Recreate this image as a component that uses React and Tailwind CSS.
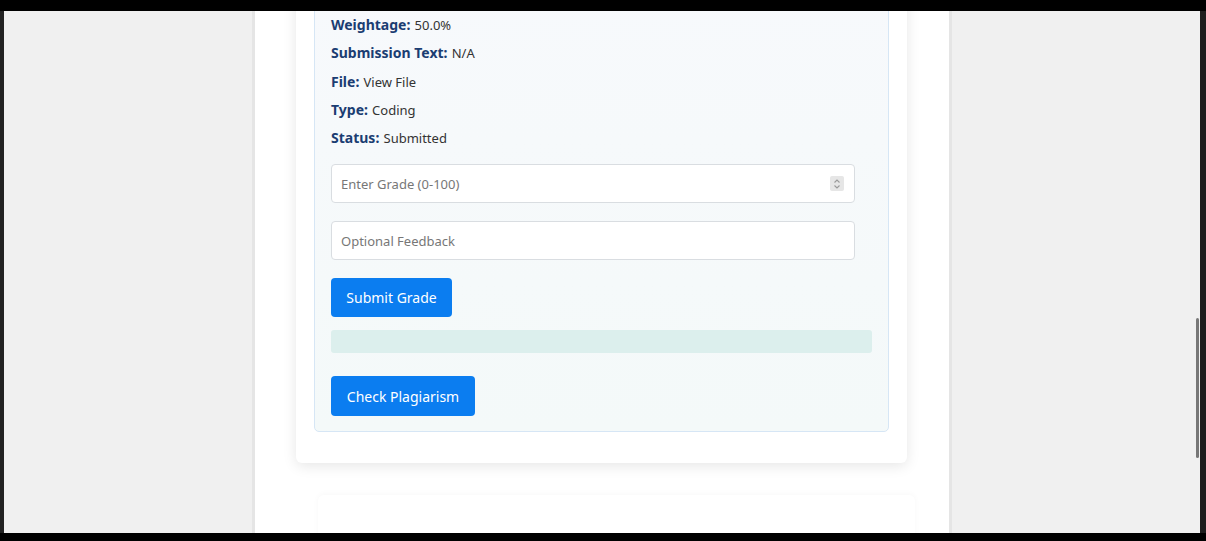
const details = [
  { label: 'Weightage:', value: '50.0%' },
  { label: 'Submission Text:', value: 'N/A' },
  { label: 'File:', value: 'View File' },
  { label: 'Type:', value: 'Coding' },
  { label: 'Status:', value: 'Submitted' },
];

function Spinner() {
  return (
    <div className="absolute right-[10px] top-[11px] flex h-[15px] w-[14px] flex-col items-center justify-center rounded-[2px] bg-[#e6e6e6]">
      <svg width="8" height="12" viewBox="0 0 8 12" fill="none" stroke="#9a9a9a" strokeWidth="1.1">
        <path d="M1.5 4.5 L4 2 L6.5 4.5" />
        <path d="M1.5 7.5 L4 10 L6.5 7.5" />
      </svg>
    </div>
  );
}

function GradeCard() {
  return (
    <div className="mt-[-32px] w-[611px] shrink-0 rounded-[6px] bg-white px-[18px] pt-[18px] pb-[31px] shadow-[0_3px_14px_rgba(0,0,0,0.10)]">
      <div className="rounded-[5px] border border-[#d6e6f5] bg-gradient-to-b from-[#f7f9fc] to-[#f4f9f9] px-[16px] pt-[16px] pb-[15px]">
        {details.map((d) => (
          <p key={d.label} className="mb-[8.25px] h-5 leading-5 whitespace-nowrap">
            <span className="text-[14px] font-bold text-[#1b3d72]">{d.label}</span>{' '}
            <span className="text-[13px] text-[#333]">{d.value}</span>
          </p>
        ))}

        <div className="relative mt-[17px] h-[39px] w-[524px] rounded-[4px] border border-[#d9dde1] bg-white">
          <input
            type="text"
            placeholder="Enter Grade (0-100)"
            className="h-full w-full rounded-[4px] bg-transparent px-[9px] text-[13px] text-[#333] outline-none placeholder:text-[#777]"
          />
          <Spinner />
        </div>

        <input
          type="text"
          placeholder="Optional Feedback"
          className="mt-[18px] block h-[39px] w-[524px] rounded-[4px] border border-[#d9dde1] bg-white px-[9px] text-[13px] text-[#333] outline-none placeholder:text-[#777]"
        />

        <button className="mt-[18px] block h-[39px] w-[121px] rounded-[4px] bg-[#0b7df0] text-[14px] text-white">
          Submit Grade
        </button>

        <div className="mt-[13px] h-[23px] w-full rounded-[3px] bg-[#dcefed]" />

        <button className="mt-[23px] block h-[40px] w-[144px] rounded-[4px] bg-[#0b7df0] text-[14px] text-white">
          Check Plagiarism
        </button>
      </div>
    </div>
  );
}

export default function App() {
  return (
    <div className="flex h-[541px] w-[1206px] flex-col overflow-hidden bg-black font-['Noto_Sans',sans-serif]">
      <div className="h-[11px] shrink-0 bg-black" />
      <div className="flex h-[522px] shrink-0">
        <div className="w-[4px] bg-[#222]" />
        <div className="relative flex flex-1 justify-center overflow-hidden bg-[#f0f0f0]">
          <div className="flex w-[700px] flex-col items-start border-x-[3px] border-[#e5e5e5] bg-white pl-[41px]">
            <GradeCard />
            <div className="mt-[32px] ml-[22px] h-[60px] w-[597px] shrink-0 rounded-t-[6px] bg-white shadow-[0_-1px_6px_rgba(0,0,0,0.03)]" />
          </div>
          <div className="absolute right-[1px] top-[307px] h-[140px] w-[3px] rounded-full bg-[#777]" />
        </div>
        <div className="w-[6px] bg-[#1e1e1e]" />
      </div>
      <div className="flex-1 bg-black" />
    </div>
  );
}
